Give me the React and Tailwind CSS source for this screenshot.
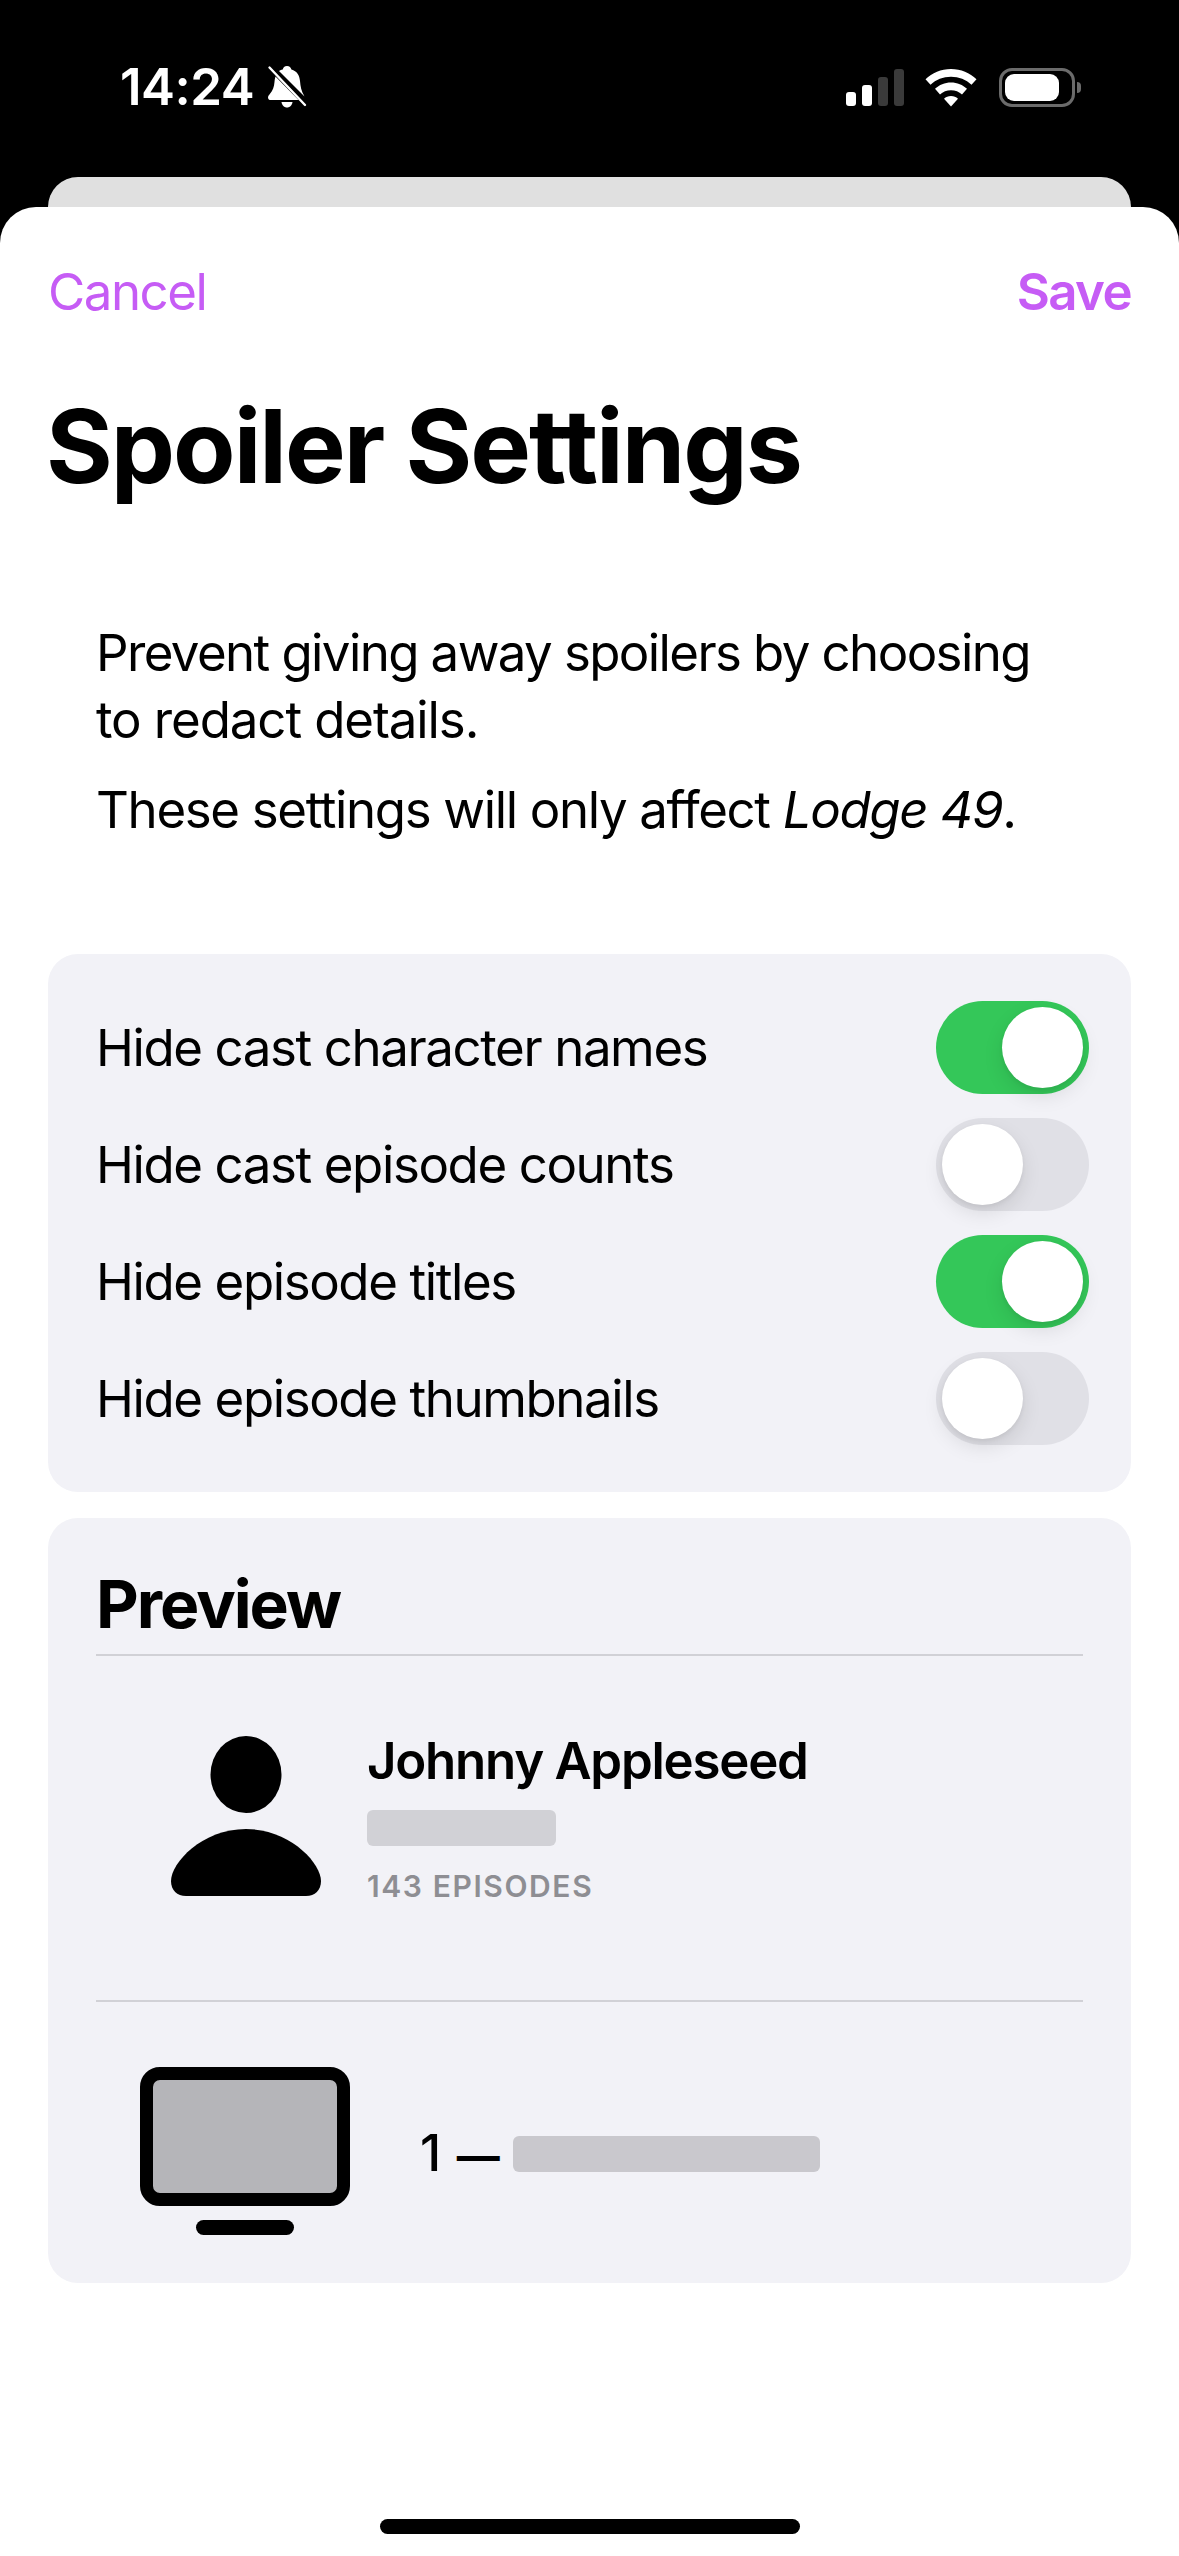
import React from 'react';

const FONT = "font-['Inter','Liberation_Sans',sans-serif]";

const settings = [
  { label: 'Hide cast character names', on: true },
  { label: 'Hide cast episode counts', on: false },
  { label: 'Hide episode titles', on: true },
  { label: 'Hide episode thumbnails', on: false },
];

function BellOff() {
  return (
    <svg width="40" height="44" viewBox="0 0 40 44" className="ml-[13px] mt-[-1px]">
      <path d="M20 1c2.500 0 4 1.600 4.400 3.600C30 6.200 32.500 10.500 33 16c.5 5.500 1.200 10 4.500 15.500L12 6c1.800-1 3.800-1.400 3.800-1.400C16 2.600 17.500 1 20 1z" fill="#fff" />
      <path d="M7.500 17c.1-2 .4-3.800 1-5.500L31.500 35H4c-1.800 0-3-1-3-2.600 0-1.400 1-2.400 2-3.700 2.800-3.300 4.100-6.700 4.500-11.700z" fill="#fff" />
      <path d="M14.500 37h11c-.5 3.400-2.700 5.500-5.500 5.500s-5-2.100-5.500-5.500z" fill="#fff" />
      <path d="M2.500 2.500L38 40" stroke="#fff" strokeWidth="2.400" strokeLinecap="round" />
    </svg>
  );
}

function StatusIcons() {
  return (
    <div className="flex items-center">
      <div className="flex items-end gap-[6px] h-[37px]">
        <div className="w-[10px] h-[14px] rounded-[3px] bg-white" />
        <div className="w-[10px] h-[21px] rounded-[3px] bg-white" />
        <div className="w-[10px] h-[29px] rounded-[3px] bg-[#3a3a3a]" />
        <div className="w-[10px] h-[37px] rounded-[3px] bg-[#3a3a3a]" />
      </div>
      <svg width="52" height="38" viewBox="0 0 52 38" className="ml-[21px]">
        <path d="M26 0c10 0 18.800 3.800 25.500 10.200l-5 5.600C41 10.700 33.900 7.800 26 7.800S11 10.700 5.500 15.800l-5-5.600C7.200 3.800 16 0 26 0z" fill="#fff" />
        <path d="M26 13.500c6.200 0 11.800 2.400 16 6.300l-5 5.600c-2.900-2.600-6.800-4.200-11-4.200s-8.100 1.600-11 4.200l-5-5.600c4.200-3.900 9.800-6.300 16-6.300z" fill="#fff" />
        <path d="M26 27c2.700 0 5.200 1 7 2.700L26 37.500l-7-7.800c1.800-1.700 4.300-2.700 7-2.700z" fill="#fff" />
      </svg>
      <div className="ml-[22px] w-[76px] h-[39px] rounded-[13px] border-[3px] border-[#6b6b6b] p-[3px]">
        <div className="w-[54px] h-full rounded-[9px] bg-white" />
      </div>
      <div className="ml-[2px] w-[4px] h-[11px] rounded-r-[4px] bg-[#6b6b6b]" />
    </div>
  );
}

function Toggle({ on }) {
  return (
    <div className={`w-[153px] h-[93px] rounded-full p-[6px] flex ${on ? 'bg-[#34c759] justify-end' : 'bg-[#e0e0e6] justify-start'}`}>
      <div className="w-[81px] h-[81px] rounded-full bg-white shadow-[0_8px_20px_rgba(0,0,0,0.10),0_2px_4px_rgba(0,0,0,0.06)]" />
    </div>
  );
}

function PersonIcon() {
  return (
    <svg width="150" height="160" viewBox="0 0 150 160" className="block">
      <ellipse cx="75" cy="38.500" rx="35.500" ry="38.500" fill="#000" />
      <path d="M75 93c44 0 75 34 75 52 0 9-6 15-15 15H15C6 160 0 154 0 145c0-18 31-52 75-52z" fill="#000" />
    </svg>
  );
}

export default function App() {
  return (
    <div className={`w-[1179px] h-[2556px] bg-black flex flex-col overflow-hidden ${FONT}`}>
      {/* status bar */}
      <div className="h-[177px] shrink-0 flex justify-between items-start pt-[68px] pl-[120px] pr-[98px] text-white">
        <div className="flex items-center h-[38px]">
          <span className="text-[51px] leading-[38px] font-semibold tracking-[-0.5px]">14:24</span>
          <BellOff />
        </div>
        <StatusIcons />
      </div>

      {/* card behind the sheet */}
      <div className="h-[30px] shrink-0 mx-[48px] bg-[#e0e0e0] rounded-t-[30px]" />

      {/* sheet */}
      <div className="flex-1 bg-white rounded-t-[36px] flex flex-col px-[48px]">
        <div className="flex justify-between items-center h-[62px] mt-[54px] text-[51px] text-[#c65cf5]">
          <span className="tracking-[-1.5px]">Cancel</span>
          <span className="font-semibold tracking-[-1.6px]">Save</span>
        </div>

        <h1 className="mt-[61px] ml-[-2px] text-[102px] leading-[124px] font-bold tracking-[-2px] text-black">Spoiler Settings</h1>

        <div className="mt-[111px] px-[48px] text-[51px] leading-[67px] text-black">
          <p>
            <span className="tracking-[-1.6px]">Prevent giving away spoilers by choosing</span>{' '}
            <span className="tracking-[-1.1px]">to redact details.</span>
          </p>
          <p className="mt-[23px] tracking-[-1.35px]">These settings will only affect <em>Lodge 49</em>.</p>
        </div>

        {/* toggles */}
        <div className="mt-[111px] h-[538px] rounded-[30px] bg-[#f2f2f7] flex flex-col pt-[47px] pl-[48px] pr-[42px] gap-[24px]">
          {settings.map((s) => (
            <div key={s.label} className="flex items-center justify-between h-[93px] text-[51px] tracking-[-1.4px] text-black">
              <span className="mt-[2px]">{s.label}</span>
              <Toggle on={s.on} />
            </div>
          ))}
        </div>

        {/* preview */}
        <div className="mt-[26px] h-[765px] rounded-[30px] bg-[#f2f2f7] flex flex-col pl-[48px] pr-[48px]">
          <div className="h-[138px] shrink-0 border-b-[2px] border-[#d1d1d6] flex items-end pb-[10px]">
            <span className="text-[66px] leading-[80px] font-bold tracking-[-2px] text-black">Preview</span>
          </div>

          <div className="h-[346px] shrink-0 border-b-[2px] border-[#d1d1d6] flex items-start pt-[80px] pl-[75px]">
            <PersonIcon />
            <div className="ml-[46px] mt-[-6px] flex flex-col items-start">
              <span className="text-[51px] leading-[62px] font-semibold tracking-[-1.25px] text-black">Johnny Appleseed</span>
              <div className="mt-[18px] w-[189px] h-[36px] rounded-[6px] bg-[#d1d1d6]" />
              <span className="mt-[22px] text-[30px] leading-[36px] font-semibold tracking-[1.6px] text-[#8e8e93]">143 EPISODES</span>
            </div>
          </div>

          <div className="flex items-start pt-[65px] pl-[44px]">
            <div className="flex flex-col items-center">
              <div className="w-[210px] h-[139px] rounded-[20px] border-[13px] border-black bg-[#b5b5b9]" />
              <div className="mt-[14px] w-[98px] h-[15px] rounded-full bg-black" />
            </div>
            <div className="ml-[70px] mt-[55px] flex items-center">
              <span className="text-[51px] leading-[62px] font-medium tracking-[-0.5px] text-black">1 <span className="ml-[3px] text-[43px] font-bold">—</span></span>
              <div className="ml-[14px] w-[307px] h-[36px] rounded-[6px] bg-[#c9c8cd]" />
            </div>
          </div>
        </div>

        <div className="mt-auto mb-[22px] mx-auto w-[420px] h-[15px] rounded-full bg-black" />
      </div>
    </div>
  );
}
